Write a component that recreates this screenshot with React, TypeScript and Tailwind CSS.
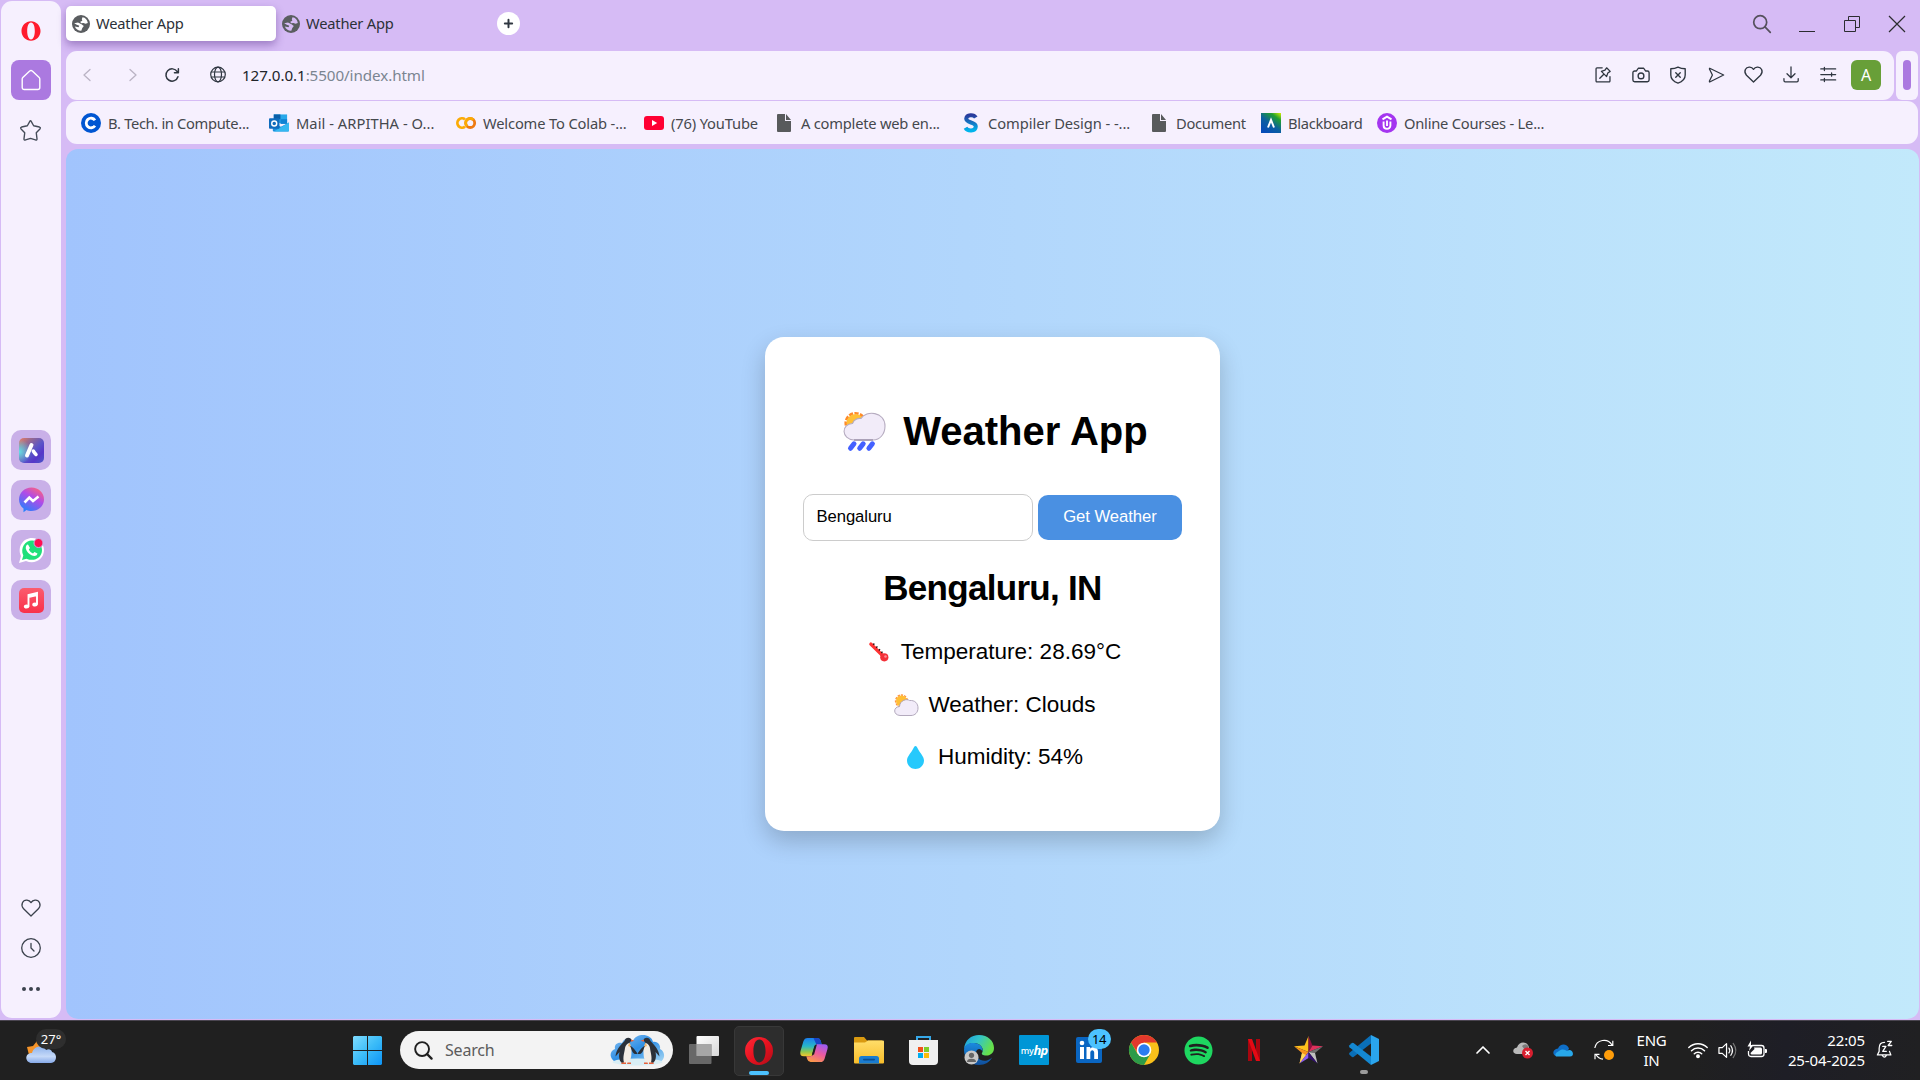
import type { ReactNode } from "react";
import { FaSpotify } from "react-icons/fa";

type P = { children: ReactNode; size?: number; vb?: string; sw?: number; cls?: string };

function Line({ children, size = 20, vb = "0 0 20 20", sw = 1.3, cls = "text-[#2f3640]" }: P) {
  return (
    <svg width={size} height={size} viewBox={vb} fill="none" stroke="currentColor" strokeWidth={sw} strokeLinecap="round" strokeLinejoin="round" className={`shrink-0 overflow-visible ${cls}`}>
      {children}
    </svg>
  );
}

function Art({ w, h, vb, children }: { w: number; h: number; vb?: string; children: ReactNode }) {
  return (
    <svg width={w} height={h} viewBox={vb ?? `0 0 ${w} ${h}`} className="shrink-0 overflow-visible">
      {children}
    </svg>
  );
}

const HEART = "M10 18 L2.6 10.8 C-1 6.500 2 1.800 6 2.200 C8 2.400 9.400 3.700 10 4.600 C10.600 3.700 12 2.400 14 2.200 C18 1.800 21 6.500 17.400 10.800 Z";

function TabGlobe({ bg }: { bg: string }) {
  return (
    <svg width="18" height="18" viewBox="0 0 18 18" className={`shrink-0 ${bg}`}>
      <circle cx="9" cy="9" r="9" fill="#5a5d60" />
      <path d="M10.500 2.200 C13.500 2.500 15.500 5 15.800 8 L13.500 8.800 L11.500 8 L9 8.300 L8.300 6.800 L10.300 5.800 L9.800 4.200Z" fill="currentColor" />
      <path d="M2.200 8.200 L6 7.600 L9.500 9.200 L11.800 11 L10.300 13 L9.300 15.800 C6.500 16 3.800 14 2.800 11.500 L6.500 12.300 L7.300 10.700 L4.800 9.700Z" fill="currentColor" />
    </svg>
  );
}

function DocIcon() {
  return (
    <Art w={20} h={20}>
      <path d="M4 1 h7 v7 h6 v10 a1 1 0 0 1 -1 1 H4 a1 1 0 0 1 -1 -1 V2 a1 1 0 0 1 1 -1Z M12 1 l5 6 h-5Z" fill="#585a5c" />
    </Art>
  );
}

const bookmarks: { cell: string; track: string; label: string; icon: ReactNode }[] = [
  {
    cell: "w-[188px]", track: "tracking-[-0.340px]", label: "B. Tech. in Compute...",
    icon: (
      <Art w={20} h={20}>
        <circle cx="10" cy="10" r="10" fill="#0056d2" />
        <path d="M14 7.3 A4.8 4.8 0 1 0 14 12.7" fill="none" stroke="#fff" strokeWidth="2.8" />
      </Art>
    ),
  },
  {
    cell: "w-[187px]", track: "tracking-[0.050px]", label: "Mail - ARPITHA - O...",
    icon: (
      <Art w={20} h={20} vb="0 0 21 20">
        <path d="M5 1 h14 v9 h-14Z" fill="#28a8ea" />
        <path d="M5 1 h7 v5 h-7Z" fill="#0a5ea8" />
        <path d="M12 6 h7 v5 h-7Z" fill="#0f83d4" />
        <path d="M4 10 L12.5 14 L21 9.5 V18 a1 1 0 0 1 -1 1 H5 a1 1 0 0 1 -1 -1Z" fill="#1a8fdc" />
        <path d="M21 9.5 L5 19 H20 a1 1 0 0 0 1 -1Z" fill="#35b8f1" />
        <rect y="5" width="11" height="11" rx="1" fill="#0f6cbd" />
        <circle cx="5.5" cy="10.5" r="2.6" fill="none" stroke="#fff" strokeWidth="1.5" />
      </Art>
    ),
  },
  {
    cell: "w-[188px]", track: "tracking-[-0.150px]", label: "Welcome To Colab -...",
    icon: (
      <Art w={20} h={20}>
        <path d="M9 6.3 A4.7 4.7 0 1 0 9 13.7" fill="none" stroke="#fbab05" strokeWidth="2.8" />
        <circle cx="14.2" cy="10" r="4.5" fill="none" stroke="#ee7a12" strokeWidth="2.8" />
        <path d="M11 13.2 A4.5 4.5 0 0 1 17.4 6.8" fill="none" stroke="#fbab05" strokeWidth="2.8" />
      </Art>
    ),
  },
  {
    cell: "w-[130px]", track: "tracking-[-0.150px]", label: "(76) YouTube",
    icon: (
      <Art w={20} h={20}>
        <rect y="3" width="20" height="14" rx="3" fill="#ff0033" />
        <path d="M8 7 L13.2 10 L8 13Z" fill="#fff" />
      </Art>
    ),
  },
  { cell: "w-[187px]", track: "tracking-[-0.220px]", label: "A complete web en...", icon: <DocIcon /> },
  {
    cell: "w-[188px]", track: "tracking-[-0.060px]", label: "Compiler Design - -...",
    icon: (
      <Art w={20} h={20}>
        <defs>
          <linearGradient id="sg" x1="0" y1="0" x2="0" y2="1"><stop stopColor="#2a3a9c" /><stop offset="1" stopColor="#00b4ec" /></linearGradient>
        </defs>
        <path d="M14.8 4.6 C12.8 1.2 5.6 1.3 5.2 5.7 C5 10.2 15 8.8 14.8 13.6 C14.4 18.7 6.5 18.6 4.5 14.8" fill="none" stroke="url(#sg)" strokeWidth="4" />
      </Art>
    ),
  },
  { cell: "w-[112px]", track: "tracking-[-0.300px]", label: "Document", icon: <DocIcon /> },
  {
    cell: "w-[116px]", track: "tracking-[-0.300px]", label: "Blackboard",
    icon: (
      <Art w={20} h={20}>
        <defs>
          <linearGradient id="bb" x1="1" y1="0" x2=".25" y2="1"><stop stopColor="#d8f000" /><stop offset=".25" stopColor="#20a030" /><stop offset=".6" stopColor="#0a5fa0" /><stop offset="1" stopColor="#064cb8" /></linearGradient>
        </defs>
        <rect width="20" height="20" fill="url(#bb)" />
        <path d="M7 14.5 L10 7 L13 14.5" fill="none" stroke="#fff" strokeWidth="2" />
      </Art>
    ),
  },
  {
    cell: "w-[180px]", track: "tracking-[-0.220px]", label: "Online Courses - Le...",
    icon: (
      <Art w={20} h={20}>
        <circle cx="10" cy="10" r="10" fill="#a435f0" />
        <path d="M5.5 6.4 L10 3.6 L14.5 6.4 M6.6 8.5 V12.5 C6.6 17 13.4 17 13.4 12.5 V8.5 M10 7.5 V13" fill="none" stroke="#fff" strokeWidth="1.9" />
      </Art>
    ),
  },
];

const toolbar: ReactNode[] = [
  <Line size={16} sw={1.6} key="a"><path d="M9 1 H2.500 a1.200 1.200 0 0 0 -1.200 1.200 V17.500 a1.200 1.200 0 0 0 1.200 1.200 H17.500 a1.200 1.200 0 0 0 1.200 -1.200 V12" /><path d="M14.500 1 L19 5.500 L16 7.500 L14.500 12 L8 5.500 L12.500 4 Z M11 9 L6 14" /></Line>,
  <Line size={18} sw={1.5} key="b"><path d="M3 5.500 H5 L7 2.500 H13 L15 5.500 H17 a2 2 0 0 1 2 2 V15.500 a2 2 0 0 1 -2 2 H3 a2 2 0 0 1 -2 -2 V7.500 a2 2 0 0 1 2 -2Z" /><circle cx="10" cy="11" r="3.2" /></Line>,
  <Line size={18} sw={1.5} key="c"><path d="M10 1.200 C12.500 2.500 15 3 18 3 V10 C18 14.500 14.500 17.500 10 19 C5.500 17.500 2 14.500 2 10 V3 C5 3 7.500 2.500 10 1.200Z M7.500 7.500 L12.500 12.500 M12.500 7.500 L7.500 12.500" /></Line>,
  <Line size={18} sw={1.4} key="d"><path d="M3 2.500 L18.500 10 L3 17.800 Q2.500 17.500 2.700 16.700 L6 10 L2.700 3.400 Q2.500 2.800 3 2.500Z" /></Line>,
  <Line size={19} sw={1.400} key="e"><path d={HEART} /></Line>,
  <Line size={16} sw={1.6} key="f"><path d="M10 0 V13 M5 8.500 L10 13.500 L15 8.500 M1.200 14.500 V17 a1.500 1.500 0 0 0 1.500 1.500 H17.500 a1.500 1.500 0 0 0 1.500 -1.500 V14.500" /></Line>,
  <Line size={18} sw={1.4} key="g"><path d="M2 3.300 H18.500 M2 9.500 H18.500 M2 15.500 H18.500 M6 1.500 V5.100 M14 7.700 V11.300 M6 13.700 V17.300" /></Line>,
];

function RainCloud() {
  return (
    <Art w={43} h={41}>
      <circle cx="12.500" cy="12" r="9.800" fill="none" stroke="#ff8a2a" strokeWidth="2.600" strokeDasharray="4.200 1.400" />
      <circle cx="12.500" cy="12" r="9" fill="#ffbf35" />
      <path d="M11 29 C-2 28 -2 13 9.500 12.500 C11 8.500 15 7 18 7.500 C23 -1 42 .5 42 15 C42 23 37 29 30 29Z" fill="#f2ecf9" stroke="#b6acc0" strokeWidth="1.100" />
      <path d="M11 29 H30" stroke="#9e93ad" strokeWidth="1.500" />
      <path d="M11 32.800 L7.500 37.300 M20.200 32.800 L16.700 37.300 M29.400 32.800 L25.900 37.300" stroke="#4461ff" strokeWidth="5" strokeLinecap="round" />
    </Art>
  );
}

function Thermometer() {
  return (
    <Art w={20} h={20}>
      <path d="M1.800 2 L14 14" stroke="#f33" strokeWidth="3.200" strokeLinecap="round" />
      <circle cx="15.300" cy="15.300" r="4.100" fill="#f33038" />
      <circle cx="16.500" cy="14.500" r="1.300" fill="#ff8b94" />
      <path d="M4.300 2.900 L5.300 1.500 M7.300 5.800 L8.300 4.400 M9.900 8.500 L10.900 7.100 M12.400 11 L13.400 9.600" stroke="#311" strokeWidth="1.400" />
    </Art>
  );
}

function SunCloud() {
  return (
    <Art w={24} h={22}>
      <circle cx="7.500" cy="7" r="5.900" fill="none" stroke="#ff9440" strokeWidth="1.500" strokeDasharray="2.300 1" />
      <circle cx="7.500" cy="7" r="5.500" fill="#ffbf35" />
      <path d="M6 21.500 C-1 21 -1 13 5.500 12.500 C6 6 13 4.500 15.500 6.500 C21 6 24 9.500 24 14 C24 18.500 21 21.500 17 21.500Z" fill="#f2ecf9" stroke="#aaa0b6" strokeWidth=".9" />
    </Art>
  );
}

function AppTile({ children }: { children: ReactNode }) {
  return <div className="flex h-[40px] w-[40px] items-center justify-center rounded-[10px] bg-[#c9b0e8]">{children}</div>;
}

function Sidebar() {
  return (
    <aside className="ml-[1px] mt-[1px] flex h-[1017px] w-[60px] shrink-0 flex-col items-center rounded-[11px] bg-[#f6f0fe]">
      <div className="mt-[19px] flex h-[22px] items-center">
        <Art w={20} h={20} vb="0 0 20 21">
          <path fillRule="evenodd" d="M10 0.300 C15.500 .3 20 4.800 20 10.500 C20 16.200 15.500 20.700 10 20.700 C4.500 20.700 0 16.200 0 10.500 C0 4.800 4.500 .3 10 .3Z M10 1.700 C7.300 1.700 6 6 6 10.500 C6 15 7.300 19.300 10 19.300 C12.700 19.300 14 15 14 10.500 C14 6 12.700 1.700 10 1.700Z" fill="#ff1b2d" />
        </Art>
      </div>
      <div className="mt-[18px] flex h-[40px] w-[40px] items-center justify-center rounded-[8px] bg-[#ab79e0]">
        <Line size={20} sw={1.400} cls="text-white"><path d="M1.200 9 a2 2 0 0 1 .6 -1.500 L8.700 1 a1.800 1.800 0 0 1 2.600 0 L18.200 7.500 a2 2 0 0 1 .6 1.500 V17.500 a2 2 0 0 1 -2 2 H3.200 a2 2 0 0 1 -2 -2Z" /></Line>
      </div>
      <div className="mt-[20px] pr-[2px]">
        <Line size={21} sw={1.300} cls="text-[#444b58]"><path d="M9.200 1.500 Q10 0 10.800 1.500 L13 5.500 L18.500 6.700 Q20 7.200 19 8.500 L15.500 12.200 L16.200 18 Q16.200 19.600 14.700 19 L10 17.500 L5.300 19 Q3.800 19.600 3.800 18 L4.500 12.200 L1 8.500 Q0 7.200 1.500 6.700 L7 5.500Z" /></Line>
      </div>
      <div className="mt-[289px] flex flex-col gap-[10px]">
        <AppTile>
          <div className="flex h-[25px] w-[25px] items-center justify-center rounded-[5px] bg-[linear-gradient(135deg,#ef7d62_0%,#9a6a8e_25%,#5a55c8_55%,#5636c8_75%,#4a58c8_100%)]">
            <Art w={25} h={25}>
              <defs><radialGradient id="teal" cx="0" cy=".55" r=".5"><stop stopColor="#5fe0ea" /><stop offset="1" stopColor="#5fe0ea" stopOpacity="0" /></radialGradient></defs>
              <rect width="25" height="25" rx="5" fill="url(#teal)" />
              <path d="M12.500 7 L8 17.500" stroke="#fff" strokeWidth="4" strokeLinecap="round" />
              <path d="M14.300 13 Q15.500 15 17 16.500" stroke="#fff" strokeWidth="3.500" strokeLinecap="round" />
            </Art>
          </div>
        </AppTile>
        <AppTile>
          <Art w={25} h={26}>
            <defs><linearGradient id="ms" x1=".8" y1="0" x2=".2" y2="1"><stop stopColor="#ff6478" /><stop offset=".4" stopColor="#b04be8" /><stop offset="1" stopColor="#1a86ff" /></linearGradient></defs>
            <path d="M12.500 .5 C19.500 .5 25 5.500 25 12.500 C25 19.500 19 24 12.500 24 C10.500 24 9 23.700 7.500 23 L4.500 25.300 V21.500 C1.500 19.300 0 16 0 12.500 C0 5.500 5.500 .5 12.500 .5Z" fill="url(#ms)" />
            <path d="M5.500 15.500 L10.300 10.500 L14 14 L19.500 9.500" fill="none" stroke="#fff" strokeWidth="2.600" />
          </Art>
        </AppTile>
        <AppTile>
          <Art w={25} h={25}>
            <path d="M0 25 L2 18 C-2 9 4 0 13 0 C20 0 25 5.500 25 12 C25 21 16 27 7 23Z" fill="#fff" />
            <path d="M3 22 L4.300 17.500 C1 10 6 2.500 13 2.500 C19 2.500 23 7 23 12 C23 20 15 24 7.500 20.700Z" fill="#1fe07a" />
            <path d="M9 6.500 L11 10 L9.800 11.500 C10.700 13.500 12.200 14.700 14 15.500 L15.500 14 L18.500 15.500 C18 18 15.500 18.500 13 17.500 C10 16.300 7.500 13.500 6.800 10.500 C6.500 8.500 7.500 6.500 9 6.500Z" fill="#fff" />
            <circle cx="19.500" cy="5" r="4.500" fill="#ff1050" stroke="#c9b0e8" strokeWidth="1" />
          </Art>
        </AppTile>
        <AppTile>
          <Art w={25} h={25}>
            <defs><linearGradient id="mu" x1="0" y1="0" x2="0" y2="1"><stop stopColor="#fb5c6e" /><stop offset="1" stopColor="#f9304a" /></linearGradient></defs>
            <rect width="25" height="25" rx="5" fill="url(#mu)" />
            <path d="M9.500 18.500 V7 L18 5 V16.500 M9.500 9 L18 7" fill="none" stroke="#fff" strokeWidth="1.900" />
            <ellipse cx="7.600" cy="18.500" rx="2.700" ry="2.100" fill="#fff" /><ellipse cx="16" cy="16.500" rx="2.700" ry="2.100" fill="#fff" />
          </Art>
        </AppTile>
      </div>
      <div className="mt-[278px] pr-[1px]"><Line sw={1.300} cls="text-[#3b424d]"><path d={HEART} /></Line></div>
      <div className="mt-[20px] pr-[1px]"><Line cls="text-[#3b424d]"><circle cx="10" cy="10" r="9.300" /><path d="M10 5.500 V10 L13 13" /></Line></div>
      <div className="mt-[29px] flex gap-[3px]">
        <i className="h-[4px] w-[4px] rounded-full bg-[#3b424d]" /><i className="h-[4px] w-[4px] rounded-full bg-[#3b424d]" /><i className="h-[4px] w-[4px] rounded-full bg-[#3b424d]" />
      </div>
    </aside>
  );
}

function Cell({ children }: { children: ReactNode }) {
  return <div className="relative flex h-full w-[55px] shrink-0 items-center justify-center">{children}</div>;
}

function Penguin({ flip }: { flip?: boolean }) {
  return (
    <g transform={flip ? "translate(55 0) scale(-1 1)" : undefined}>
      <path d="M15 9 C20 8 22 12 21.500 18 C21.500 23 20.500 28 17 29 L13 29 C9 28 9 22 10 17Z" fill="#f3ece4" />
      <path d="M19.500 8 L21 13 L18 12Z" fill="#f2b56a" />
      <path d="M14.500 7 C15 3 20.500 2.500 21.500 6 L20 8.500 C17.500 9.500 15.500 11 15 14 C14.500 19 12.500 23 14 28.500 L12 29 C9 27 8.500 22 9.500 18 L5.500 22.500 C6 16 10 11.500 14.500 7Z" fill="#2b3038" />
      <path d="M20 11.500 C23 13 25 16 27.500 19.500 C26 20.500 24 20.500 22 17Z" fill="#2b3038" />
      <path d="M21 5.500 L24.500 6.800 L21 7.800Z M12 28.500 h4 v1.500 h-5Z M17.500 28.500 h3.500 v1.500 h-4Z" fill="#e8613a" />
    </g>
  );
}

function Taskbar() {
  return (
    <footer className="flex h-[60px] w-full shrink-0 items-center border-t border-[#4a4550] bg-[linear-gradient(90deg,#202020_0%,#202020_88%,#1e1e26_93%,#202022_100%)] pb-[1px] text-white">
      <div className="flex w-[340px] pl-[26px]">
        <div className="relative h-[34px] w-[44px]">
          <svg width="30" height="36" viewBox="0 0 30 36" className="overflow-visible">
            <path d="M1 14 L7 13 L11 8 L16 14 L12 22 L3 22Z" fill="#f5942a" />
            <defs><linearGradient id="wc" x1="0" y1="0" x2="0" y2="1"><stop stopColor="#8fb3ec" /><stop offset=".6" stopColor="#c5d9f8" /><stop offset="1" stopColor="#86a9e8" /></linearGradient></defs>
            <path d="M6 30 C-1 30 -2 20 6 20 C8 12 18 12 20 17 C23 15 26 17 26 19 C32 20 31 30 25 30Z" fill="url(#wc)" />
          </svg>
          <span className="absolute left-[10px] top-[-4px] flex h-[20px] w-[30px] items-center justify-center rounded-full bg-[#2e2e2e] font-['Noto_Sans'] text-[13px] leading-none">27°</span>
        </div>
      </div>
      <Cell>
        <Art w={29} h={29}>
          <defs><linearGradient id="wn" x1="0" y1="0" x2="1" y2="1"><stop stopColor="#7fdcff" /><stop offset=".5" stopColor="#3cbcf8" /><stop offset="1" stopColor="#0d94f6" /></linearGradient></defs>
          <path d="M1 0 H14 V14 H0 V1Z M15 0 H28 L29 1 V14 H15Z M0 15 H14 V29 H1 L0 28Z M15 15 H29 V28 L28 29 H15Z" fill="url(#wn)" />
        </Art>
      </Cell>
      <div className="ml-[5px] mr-[3.500px] flex h-[38px] w-[273px] items-center rounded-full bg-[#f3f3f3] pl-[14px] pr-[8px]">
        <Line size={19} sw={2} cls="text-[#1f1f1f]"><circle cx="8.500" cy="8.500" r="7.300" /><path d="M13.700 13.700 L18.500 18.500" strokeWidth="2.500" /></Line>
        <span className="ml-[12px] flex-1 font-['Noto_Sans'] text-[16px] tracking-[-0.200px] text-[#5c5c5c]">Search</span>
        <Art w={55} h={32}>
          <defs><linearGradient id="pg" x1="0" y1="0" x2="1" y2="1"><stop stopColor="#8ec3f0" /><stop offset=".5" stopColor="#2f8fe6" /><stop offset="1" stopColor="#a8d8f4" /></linearGradient></defs>
          <path d="M6 28 C-1 25 -1 17 5 15 C4 10 8 8 12 9 C15 3 20 4 23 7 C26 -1 41 -1 43 8 C48 7 51 12 50 15 C56 18 55 26 50 28Z" fill="url(#pg)" />
          <ellipse cx="27.500" cy="28" rx="25" ry="3.500" fill="#d9eef5" />
          <Penguin /><Penguin flip />
        </Art>
      </div>
      <Cell>
        <Art w={30} h={28}>
          <defs><linearGradient id="tv" x1="0" y1="0" x2="1" y2="1"><stop stopColor="#fff" /><stop offset="1" stopColor="#d8d8d8" /></linearGradient></defs>
          <rect x="7.500" width="22.500" height="20" rx="1" fill="url(#tv)" />
          <rect y="8" width="22.500" height="20" rx="1" fill="#757575" opacity=".85" />
          <rect x="7.500" y="8" width="15" height="12" fill="#a6a6a6" />
        </Art>
      </Cell>
      <Cell>
        <div className="relative mt-[1px] flex h-[50px] w-[50px] items-center justify-center rounded-[5px] border border-[#383838] bg-[#2d2d2d]">
          <Art w={28} h={28} vb="0 0 29 29">
            <defs><linearGradient id="op" x1="0" y1="0" x2="1" y2="1"><stop stopColor="#ff2a38" /><stop offset=".5" stopColor="#e8121f" /><stop offset="1" stopColor="#b00c18" /></linearGradient></defs>
            <path fillRule="evenodd" d="M14.500 0 A14.500 14.500 0 1 1 14.500 29 A14.500 14.500 0 1 1 14.500 0Z M15 2.700 C10.500 2.700 8.700 8.500 8.700 14.500 C8.700 20.500 10.500 26.300 15 26.300 C19 26.300 21.300 20.500 21.300 14.500 C21.300 8.500 19 2.700 15 2.700Z" fill="url(#op)" />
          </Art>
          <i className="absolute bottom-[0px] left-[14px] h-[4px] w-[20px] rounded-full bg-[#4cc2ff]" />
        </div>
      </Cell>
      <Cell>
        <Art w={28} h={26} vb="0 0 29 27">
          <defs>
            <linearGradient id="c1" x1="0" y1="0" x2="0" y2="1"><stop stopColor="#1b7ff0" /><stop offset=".45" stopColor="#27b6c8" /><stop offset=".75" stopColor="#8ec850" /><stop offset="1" stopColor="#f8c62c" /></linearGradient>
            <linearGradient id="c2" x1=".8" y1="0" x2=".3" y2="1"><stop stopColor="#9b5cf6" /><stop offset=".5" stopColor="#ec5aa0" /><stop offset="1" stopColor="#fb9a48" /></linearGradient>
          </defs>
          <path d="M8 1 H18 Q20.500 1 21.500 4 L22.500 8 H18 Q15.500 8 14.800 10.500 L12 20 H4 Q-1 20 .5 14.500 L3.500 4.500 Q4.500 1 8 1Z" fill="url(#c1)" />
          <path d="M18 1 Q20.500 1 21.500 4 L22.500 8 H17 L14 1Z" fill="#1846c8" />
          <path d="M21 26 H11 Q8.500 26 7.500 23 L6.500 20 H10.500 Q13.500 20 14.200 17 L17 7.500 H25 Q30 7.500 28.500 12.500 L25.500 22.500 Q24.500 26 21 26Z" fill="url(#c2)" />
          <path d="M12.500 18 L15 9 Q16 7.500 17.500 7.700 L14.500 18.500 Z" fill="#202020" />
        </Art>
      </Cell>
      <Cell>
        <Art w={30} h={27}>
          <defs><linearGradient id="fo" x1="0" y1="0" x2="0" y2="1"><stop stopColor="#ffdd69" /><stop offset="1" stopColor="#f8bd2a" /></linearGradient></defs>
          <path d="M0 1 Q0 0 1 0 H10 L13 3.500 H28 V10 H0Z" fill="#d99a10" />
          <path d="M0 5.500 H11 L14 3.500 H29 Q30 3.500 30 4.500 V25.500 Q30 26.500 29 26.500 H1 Q0 26.500 0 25.500Z" fill="url(#fo)" />
          <path d="M5 26.500 V21.500 Q5 19 7.500 19 H22.500 Q25 19 25 21.500 V26.500Z" fill="#1a7cd0" />
          <rect x="9" y="21.800" width="12" height="1.600" rx=".8" fill="#0b4e92" />
        </Art>
      </Cell>
      <Cell>
        <div className="mr-[1px]">
          <Art w={29} h={29}>
            <path d="M8 5 V1 H21 V5" fill="none" stroke="#36a8e8" strokeWidth="2" />
            <path d="M0 4 H29 V25 Q29 29 25 29 H4 Q0 29 0 25Z" fill="#f0f0f0" />
            <rect x="9" y="11" width="5" height="5" fill="#f1511b" /><rect x="15" y="11" width="5" height="5" fill="#80cc28" /><rect x="9" y="17" width="5" height="5" fill="#00adef" /><rect x="15" y="17" width="5" height="5" fill="#fbbc09" />
          </Art>
        </div>
      </Cell>
      <Cell>
        <Art w={30} h={30}>
          <defs>
            <linearGradient id="e1" x1="0" y1="0" x2="1" y2=".4"><stop stopColor="#1b9de2" /><stop offset=".5" stopColor="#33c4c8" /><stop offset="1" stopColor="#66e04a" /></linearGradient>
            <linearGradient id="e2" x1="0" y1="0" x2="0" y2="1"><stop stopColor="#1a8be0" /><stop offset="1" stopColor="#104f9c" /></linearGradient>
          </defs>
          <path d="M0 14 C1 5 7 0 15 0 C24 0 30 6 30 13 C30 19 25 21 21 20.500 C18 20 17 19 18.500 17 C20 12 15 8 10 8 C5 8 1 11 0 14Z" fill="url(#e1)" />
          <path d="M0 15 C0 10 5 7.500 10 8 C15 8 19.500 12 18.500 16.500 C17 13 13 13 12 17 C11.500 22 16 27 23 25.500 Q27 24 28 22.500 C26 27 21 30 15 30 C6 30 0 23 0 15Z" fill="url(#e2)" />
          <circle cx="7.500" cy="22.500" r="7" fill="#c8c8c8" /><circle cx="7.500" cy="20.300" r="2.600" fill="#666" /><path d="M3 27 Q3 23.800 7.500 23.800 Q12 23.800 12 27Z" fill="#666" />
        </Art>
      </Cell>
      <Cell>
        <div className="flex h-[30px] w-[30px] items-center justify-center rounded-[1px] bg-[#0096d6] font-['Noto_Sans'] text-[9px] font-medium leading-none tracking-[-0.300px]">
          my<span className="text-[13px] font-bold italic tracking-[-1px]">hp</span>
        </div>
      </Cell>
      <Cell>
        <div className="relative mr-[1px] h-[26px] w-[26px] rounded-[2px] bg-[#0a66c2]">
          <svg width="26" height="26" viewBox="0 0 26 26">
            <path d="M4 10 H8 V22 H4Z M10.500 10 H14.200 V11.700 C15.500 9.500 22 8.500 22 15 V22 H18.200 V15.800 C18.200 12.300 14.300 12.500 14.300 15.800 V22 H10.500Z" fill="#fff" /><circle cx="6" cy="6" r="2.300" fill="#fff" />
          </svg>
          <span className="absolute left-[12px] top-[-8px] flex h-[20px] w-[23px] items-center justify-center rounded-full bg-[#4cc2ff] font-['Noto_Sans'] text-[13px] leading-none tracking-[-0.500px] text-black">14</span>
        </div>
      </Cell>
      <Cell>
        <Art w={30} h={30}>
          <circle cx="15" cy="15" r="15" fill="#f9c01a" />
          <path d="M2 7.500 A15 15 0 0 1 28 7.500 H15 L9 18.500Z" fill="#e2382c" />
          <path d="M2 7.500 L8.500 18.700 L21.500 18.700 L15 30 A15 15 0 0 1 2 7.500Z" fill="#2c9b48" />
          <circle cx="15" cy="15" r="7.300" fill="#fff" /><circle cx="15" cy="15" r="5.700" fill="#2a7cf0" />
        </Art>
      </Cell>
      <Cell><FaSpotify size={29} className="mr-[1px] shrink-0 text-[#1ed760]" /></Cell>
      <Cell>
        <div className="mr-[1px]">
          <Art w={12} h={22}>
            <path d="M0 0 H4 V22 H0Z M8 0 H12 V22 H8Z" fill="#a8060f" /><path d="M0 0 H4 L12 22 H8Z" fill="#e50914" />
          </Art>
        </div>
      </Cell>
      <Cell>
        <div className="mr-[1px]">
          <Art w={29} h={28}>
            <path d="M14.500 0 L10.500 9.500 L0 10.300 L14.500 16Z" fill="#ffc21c" />
            <path d="M0 10.300 L8 17 L5.500 27.500 L14.500 16Z" fill="#f7931e" />
            <path d="M8 17 L5.500 27.500 L12 19Z" fill="#ffd95a" />
            <path d="M14.500 0 L18.500 9.500 L14.500 16Z" fill="#8c1240" />
            <path d="M18.500 9.500 L29 10.300 L14.500 16Z" fill="#e0305c" />
            <path d="M29 10.300 L21 17 L14.500 16Z" fill="#707070" />
            <path d="M21 17 L23.500 27.500 L14.500 16Z" fill="#c0c0c0" />
            <path d="M5.500 27.500 L14.500 16 V22Z" fill="#8a5cf0" /><path d="M23.500 27.500 L14.500 16 V22Z" fill="#32106e" />
          </Art>
        </div>
      </Cell>
      <Cell>
        <Art w={30} h={30}>
          <path d="M22 0 L30 4 V26 L22 30Z" fill="#2aa5ee" />
          <path d="M22 0 V8.500 L4.500 22 Q3.500 22.500 2.700 21.800 L.5 19.800 Q-.5 18.800 .5 17.800Z" fill="#0a6fb8" />
          <path d="M22 30 V21.500 L4.500 8 Q3.500 7.500 2.700 8.200 L.5 10.200 Q-.5 11.200 .5 12.200Z" fill="#1488d2" />
        </Art>
        <i className="absolute bottom-[5px] left-[23.500px] h-[4px] w-[8px] rounded-full bg-[#9b9b9b]" />
      </Cell>
      <div className="ml-auto flex h-full items-center">
        <div className="flex w-[40px] justify-center"><Line size={14} vb="0 0 14 14" sw={1.700} cls="text-white"><path d="M1 10 L7 4 L13 10" /></Line></div>
        <div className="flex w-[40px] justify-center">
          <Art w={20} h={17}>
            <path d="M4 12 C-1 12 -1 6 4 5.500 C6 -1 14 -1 16 5 V12Z" fill="#b9b9b9" /><path d="M9 4 Q13 0 16 5 L12 8Z" fill="#7a7a7a" />
            <circle cx="14.500" cy="11" r="5.500" fill="#d81f2f" /><path d="M12.500 9 L16.500 13 M16.500 9 L12.500 13" stroke="#fff" strokeWidth="1.300" />
          </Art>
        </div>
        <div className="flex w-[40px] justify-center">
          <Art w={20} h={13}>
            <path d="M4 12 C-1 12 -1 5 5 4.500 C7 -1 14 -1 16 4.500 L12 12Z" fill="#0f6fc8" /><path d="M3 12.500 C1 10 4 8 6 7 C10 4 12 6 14 7 C19 3 23 12.500 17 12.500Z" fill="#28a8ea" />
          </Art>
        </div>
        <div className="flex w-[41px] justify-center">
          <Art w={20} h={20}>
            <path d="M.8 8 A9.300 9.300 0 0 1 18 5 M18.800 .8 V5.500 H14 M9 19.200 A9.300 9.300 0 0 1 2 14.500 M1 19.200 V14.300 H5.500" fill="none" stroke="#fff" strokeWidth="1.200" />
            <circle cx="15" cy="15" r="5" fill="#ff9d0a" />
          </Art>
        </div>
        <div className="flex w-[55px] flex-col items-center font-['Noto_Sans'] text-[15px] leading-[20px] tracking-[-0.300px]"><span>ENG</span><span>IN</span></div>
        <div className="ml-[9px] flex items-center gap-[10px]">
          <Line size={20} sw={1.500} cls="text-white"><path d="M.8 7.500 A13 13 0 0 1 19.200 7.500 M3.500 10.700 A9.200 9.200 0 0 1 16.500 10.700 M6.300 13.700 A5.200 5.200 0 0 1 13.700 13.700" /><circle cx="10" cy="16.300" r="1.200" fill="currentColor" /></Line>
          <Line size={19} sw={1.300} cls="text-white"><path d="M1 7 H4.500 L9 2.800 V17.200 L4.500 13 H1Z M11.500 7.500 Q13.300 10 11.500 12.500 M13.500 5 Q17 10 13.500 15" /><path d="M16 2.500 Q21.500 10 16 17.500" stroke="#777" /></Line>
          <Art w={20} h={16}>
            <path d="M5 3.500 H14.500 Q17 3.500 17 6 V12 Q17 14.500 14.500 14.500 H4 Q1.500 14.500 1.500 12 V9" fill="none" stroke="#fff" strokeWidth="1.300" />
            <path d="M7 5.500 H13.500 Q15 5.500 15 7 V11 Q15 12.500 13.500 12.500 H5 Q3.500 12.500 3.500 11 L7.500 7Z M18 7 H19 Q20 7 20 8 V10 Q20 11 19 11 H18Z M4 -1.500 L.5 4.500 H3 L2 9 L6.500 3 H4Z" fill="#fff" />
          </Art>
        </div>
        <div className="ml-[8px] flex w-[90px] flex-col items-end font-['Noto_Sans'] text-[15px] leading-[20px] tracking-[-0.120px]"><span>22:05</span><span>25-04-2025</span></div>
        <div className="ml-[11px] mr-[26px]">
          <Line size={18} sw={1.400} cls="text-white"><path d="M9.500 1.500 C5.500 1.500 3.500 4.500 3.500 8 V11.500 L1.500 15.500 H16.500 L15 11.500 M7 16 Q9.500 20 11.500 16 M13 .5 H17 L13.500 5 H17.500 M7.500 6 H11 L7.500 11.500 H11.500" /></Line>
        </div>
      </div>
    </footer>
  );
}

function Browser() {
  return (
    <div className="flex min-w-0 flex-1 flex-col pl-[5px]">
      <div className="flex h-[51px] pt-[6px] font-['Noto_Sans'] text-[14.700px] tracking-[-0.200px] text-[#2c3138]">
        <div className="flex h-[35px] w-[210px] items-center gap-[6px] rounded-[5px] bg-white pl-[6px] shadow-[0_4px_8px_rgba(70,30,120,0.400)]"><TabGlobe bg="text-white" /><span>Weather App</span></div>
        <div className="flex h-[35px] w-[221px] items-center gap-[6px] pl-[6px]"><TabGlobe bg="text-[#d6bbf5]" /><span>Weather App</span></div>
        <div className="mt-[6px] flex h-[23px] w-[23px] items-center justify-center rounded-full bg-white"><Line size={9} vb="0 0 11 11" sw={2.400}><path d="M5.500 1 V10 M1 5.500 H10" /></Line></div>
        <div className="ml-auto mr-[1px] flex h-[35px]">
          <div className="flex w-[45px] items-center justify-center"><Line size={18} sw={1.900} cls="text-[#55505c]"><circle cx="8" cy="8" r="7.200" /><path d="M13.300 13.300 L19.200 19.200" /></Line></div>
          <div className="flex w-[45px] items-end justify-center pb-[9px]"><i className="h-[1px] w-[16px] bg-[#2c2c30]" /></div>
          <div className="flex w-[45px] items-center justify-center"><Art w={16} h={16}><path d="M.5 4.500 H11.500 V15.500 H.5Z M4.500 4.500 V.5 H15.500 V11.500 H11.500" fill="none" stroke="#2c2c30" /></Art></div>
          <div className="flex w-[45px] items-center justify-center"><Art w={16} h={16}><path d="M0 0 L16 16 M16 0 L0 16" stroke="#2c2c30" strokeWidth="1.200" /></Art></div>
        </div>
      </div>
      <div className="flex h-[48.500px] shrink-0 gap-[2px] pr-[2px]">
        <div className="flex flex-1 items-center rounded-[11px] bg-[#f6f0fe] pl-[14px] pr-[13px]">
          <div className="flex w-[14px] justify-center"><Line size={12} vb="0 0 12 12" cls="text-[#bab3c4]"><path d="M9 .5 L3 6 L9 11.500" /></Line></div>
          <div className="ml-[32px] flex w-[14px] justify-center"><Line size={12} vb="0 0 12 12" cls="text-[#bab3c4]"><path d="M3 .5 L9 6 L3 11.500" /></Line></div>
          <div className="ml-[24px] flex w-[16px] justify-center"><Line size={14} vb="0 0 16 16" sw={1.700}><path d="M14.800 10 A7 7 0 1 1 14 4.200 M15.300 .8 V5.300 H10.800" /></Line></div>
          <div className="ml-[30px] pb-[1px]"><Line size={16} vb="0 0 16 16" sw={1.200}><circle cx="8" cy="7.500" r="7.300" /><ellipse cx="8" cy="7.500" rx="3.500" ry="7.300" /><path d="M1.500 5 H14.500 M1.500 10 H14.500" /></Line></div>
          <div className="ml-[16px] flex-1 font-['Noto_Sans'] text-[15.200px] tracking-[-0.080px] text-[#7b8591]"><span className="text-[#20242a]">127.0.0.1</span>:5500/index.html</div>
          <div className="flex pb-[1px]">{toolbar.map((icon, i) => <div key={i} className="flex w-[37.500px] items-center justify-center">{icon}</div>)}</div>
          <div className="ml-[4px] flex h-[30px] w-[30px] items-center justify-center rounded-[6px] bg-[#689f38] font-['Noto_Sans'] text-[16px] text-white">A</div>
        </div>
        <div className="flex w-[22px] items-center justify-center rounded-[6px] bg-[#f6f0fe]"><i className="h-[30px] w-[8px] rounded-full bg-[#ab79e0]" /></div>
      </div>
      <div className="mr-[2px] mt-[1.500px] flex h-[42.500px] shrink-0 items-center rounded-[11px] bg-[#f6f0fe] pl-[15px] pt-[2px]">
        {bookmarks.map((b) => (
          <div key={b.label} className={`flex shrink-0 items-center gap-[7px] ${b.cell}`}>
            {b.icon}
            <span className={`whitespace-nowrap font-['Noto_Sans'] text-[14.700px] text-[#45484d] ${b.track}`}>{b.label}</span>
          </div>
        ))}
      </div>
      <main className="mr-[1px] mt-[5.500px] flex h-[870px] shrink-0 items-center justify-center rounded-[12px] bg-[linear-gradient(to_right,#a1c4fd,#c2e9fb)]">
        <section className="flex h-[494px] w-[455px] flex-col items-center rounded-[19px] bg-white font-['Liberation_Sans'] text-black shadow-[0_10px_25px_rgba(0,0,0,0.200)]">
          <h1 className="mt-[71px] flex h-[46px] items-center gap-[17px] pl-[6px] text-[40px] font-bold leading-[46px]"><RainCloud /><span>Weather App</span></h1>
          <div className="mt-[40px] flex items-center gap-[5px]">
            <div className="flex h-[47px] w-[230px] items-center rounded-[10px] border border-[#ccc] pb-[2px] pl-[12.500px] text-[16.670px] tracking-[-0.080px]">Bengaluru</div>
            <button className="h-[45px] w-[144px] rounded-[10px] bg-[#4a90e2] pb-[2px] text-[16.670px] tracking-[-0.050px] text-white">Get Weather</button>
          </div>
          <h2 className="mt-[27px] text-[35px] font-bold leading-[40px] tracking-[-0.700px]">Bengaluru, IN</h2>
          <div className="mt-[31px] flex flex-col items-center gap-[26.500px] pl-[5px] text-[22.500px] leading-[26px]">
            <p className="flex items-center gap-[12px]"><Thermometer /><span>Temperature: 28.69°C</span></p>
            <p className="flex items-center gap-[10px]"><SunCloud /><span>Weather: Clouds</span></p>
            <p className="flex items-center gap-[14px]"><Art w={17} h={23}><path d="M8.500 0 C9.500 0 10 1 11 3 C13 7 17 10.500 17 14.500 C17 19.500 13 23 8.500 23 C4 23 0 19.500 0 14.500 C0 10.500 4 7 6 3 C7 1 7.500 0 8.500 0Z" fill="#26c9fc" /></Art><span>Humidity: 54%</span></p>
          </div>
        </section>
      </main>
    </div>
  );
}

export default function App() {
  return (
    <div className="flex h-[1080px] w-[1920px] flex-col overflow-hidden bg-[#d6bbf5]">
      <div className="flex h-[1020px] shrink-0"><Sidebar /><Browser /></div>
      <Taskbar />
    </div>
  );
}
